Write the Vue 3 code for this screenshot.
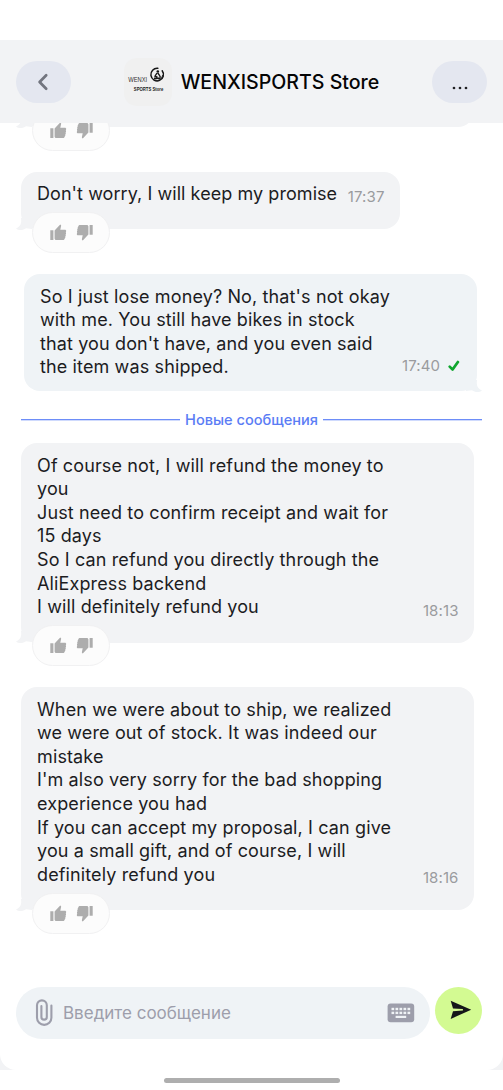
<script setup>
const messages = [
  { id: 'm0', kind: 'in clipped', lines: [], time: '', reactions: true },
  { id: 'm1', kind: 'in short', lines: ["Don't worry, I will keep my promise"], time: '17:37', reactions: true },
  {
    id: 'm2',
    kind: 'out',
    lines: [
      "So I just lose money? No, that's not okay",
      'with me. You still have bikes in stock',
      "that you don't have, and you even said",
      'the item was shipped.',
    ],
    time: '17:40',
    sent: true,
  },
  { id: 'div', divider: 'Новые сообщения' },
  {
    id: 'm3',
    kind: 'in refund',
    lines: [
      'Of course not, I will refund the money to',
      'you',
      'Just need to confirm receipt and wait for',
      '15 days',
      'So I can refund you directly through the',
      'AliExpress backend',
      'I will definitely refund you',
    ],
    time: '18:13',
    reactions: true,
  },
  {
    id: 'm4',
    kind: 'in sorry',
    lines: [
      'When we were about to ship, we realized',
      'we were out of stock. It was indeed our',
      'mistake',
      "I'm also very sorry for the bad shopping",
      'experience you had',
      'If you can accept my proposal, I can give',
      'you a small gift, and of course, I will',
      'definitely refund you',
    ],
    time: '18:16',
    reactions: true,
  },
]
const keys = [0, 1, 2, 3, 4]
</script>

<template>
  <div class="screen">
    <div class="sheet">
      <header class="header">
        <button class="pill-btn back" aria-label="Back">
          <svg width="12" height="18" viewBox="0 0 12 18"><path d="M9.2 2.2 2.6 9l6.6 6.8" fill="none" stroke="#72757f" stroke-width="2.7" stroke-linecap="round" stroke-linejoin="round" /></svg>
        </button>
        <div class="store">
          <svg class="avatar" width="48" height="48" viewBox="0 0 48 48">
            <rect width="48" height="48" rx="13" fill="#f0f0f0" />
            <path d="M38.2 12.8a6.3 6.3 0 1 1-4.4-2.5" fill="none" stroke="#161616" stroke-width="1.5" stroke-linecap="round" />
            <path d="M30.3 21.8q6.7 2.5 8.6-5" fill="none" stroke="#222" stroke-width="1" />
            <circle cx="33.8" cy="13.5" r="1.3" fill="#111" />
            <path d="m33 15-2 3.2 2.5 1M33.8 15l1.5 2 1.2 2.5M30 20.2h6.5" fill="none" stroke="#181818" stroke-width="1.4" />
            <text x="4.2" y="23.6" font-size="7" textLength="19" lengthAdjust="spacingAndGlyphs" class="logo thin">WENXI</text>
            <text x="9.8" y="32.6" font-size="4.8" textLength="29.5" lengthAdjust="spacingAndGlyphs" class="logo">SPORTS Store</text>
          </svg>
          <h1>WENXISPORTS Store</h1>
        </div>
        <button class="pill-btn more" aria-label="More">
          <svg width="16" height="4" viewBox="0 0 16 4" fill="#202124"><circle cx="2" cy="2" r="1.35" /><circle cx="8" cy="2" r="1.35" /><circle cx="14" cy="2" r="1.35" /></svg>
        </button>
      </header>

      <main class="chat">
        <template v-for="m in messages" :key="m.id">
          <div v-if="m.divider" class="divider"><i class="rule"></i><span>{{ m.divider }}</span><i class="rule"></i></div>
          <article v-else class="bubble" :class="m.kind">
            <svg class="tail" width="16" height="13" viewBox="0 0 16 13"><path d="M5 0C5.8 5.5 4.3 8.8 0 10.4c2.6 2.2 7 2.1 10-.2L16 11V0Z" /></svg>
            <div class="text"><div v-for="line in m.lines" :key="line">{{ line }}</div></div>
            <div v-if="m.time" class="meta">
              <time>{{ m.time }}</time>
              <svg v-if="m.sent" width="12" height="12" viewBox="0 0 12 12"><path d="M1.7 6.6 4.6 9.6 9.9 2" fill="none" stroke="#10a62f" stroke-width="2.7" stroke-linecap="round" stroke-linejoin="round" /></svg>
            </div>
            <div v-if="m.reactions" class="reactions">
              <svg width="17" height="17" viewBox="0 0 17 17"><path d="M.3 6.3h3.1V16H.3ZM4.6 6.6 10.2.5l.7.6c.2.2.3.5.2.8l-.8 3.9h4.6c.8 0 1.3.6 1.3 1.3l-.4 1.3.3 1-.5 1.2.2 1.1-.6 1.1.1.9-.7 1c-.2.8-.7 1.3-1.5 1.3H6.2c-.9 0-1.6-.6-1.6-1.5Z" /></svg>
              <svg class="down" width="17" height="17" viewBox="0 0 17 17"><path d="M.3 6.3h3.1V16H.3ZM4.6 6.6 10.2.5l.7.6c.2.2.3.5.2.8l-.8 3.9h4.6c.8 0 1.3.6 1.3 1.3l-.4 1.3.3 1-.5 1.2.2 1.1-.6 1.1.1.9-.7 1c-.2.8-.7 1.3-1.5 1.3H6.2c-.9 0-1.6-.6-1.6-1.5Z" /></svg>
            </div>
          </article>
        </template>
      </main>

      <footer class="composer">
        <div class="field">
          <svg width="18" height="28" viewBox="0 0 18 28"><path d="M16.4 6.5v12.2a7.2 7.2 0 0 1-14.4 0V6.3a4.9 4.9 0 0 1 9.8 0v11.6a2.7 2.7 0 0 1-5.4 0V7" fill="none" stroke="#9d9eab" stroke-width="2.1" stroke-linecap="round" /></svg>
          <span class="placeholder">Введите сообщение</span>
          <svg width="28" height="20" viewBox="0 0 28 20">
            <rect x=".6" y=".6" width="26.6" height="18.6" rx="3" fill="#9d9eab" />
            <g fill="#f0f3f6">
              <template v-for="k in keys" :key="k">
                <rect :x="4.5 + k * 4" y="4.8" width="2.7" height="2.4" />
                <rect :x="4.5 + k * 4" y="8.7" width="2.7" height="2.4" />
              </template>
              <rect x="8.6" y="12.8" width="10.6" height="2.2" />
            </g>
          </svg>
        </div>
        <button class="send" aria-label="Send">
          <svg width="22" height="20" viewBox="0 0 22 20"><path d="M.7.7 21.2 9.8.7 18.9 3 11.2l9.9-.7V9.1L3 8.4Z" fill="#15171a" /></svg>
        </button>
      </footer>
    </div>
    <div class="home"></div>
  </div>
</template>

<style>
body { background: #fff; }
</style>

<style scoped>
.screen {
  width: 503px;
  height: 1090px;
  box-sizing: border-box;
  padding-top: 40px;
  overflow: hidden;
  background: #fff;
  font-family: Inter, "Liberation Sans", sans-serif;
  color: #1c1c1f;
}
.sheet {
  height: 1030px;
  display: flex;
  flex-direction: column;
  background: linear-gradient(#fff 50%, #f2f3f5 50%);
}
.header {
  height: 83px;
  flex: none;
  box-sizing: border-box;
  padding: 0 16px;
  display: flex;
  align-items: center;
  justify-content: space-between;
  background: #f2f3f5;
}
button { border: 0; padding: 0; margin: 0; display: flex; align-items: center; justify-content: center; }
.pill-btn { width: 55px; height: 42px; border-radius: 21px; background: #e4e7f0; }
.back { padding-right: 2px; }
.more { padding-top: 12px; }
.store { display: flex; align-items: center; gap: 9px; }
.logo { font-family: "Liberation Sans", sans-serif; font-weight: 700; fill: #222; }
.thin { font-weight: 400; fill: #333; }
h1 { margin: 0; font-size: 19.6px; line-height: 28px; font-weight: 500; color: #050505; white-space: nowrap; }
.chat {
  flex: 1;
  min-height: 0;
  overflow: hidden;
  display: flex;
  flex-direction: column;
  align-items: flex-start;
  background: #fff;
}
.bubble {
  position: relative;
  flex: none;
  box-sizing: border-box;
  width: 453px;
  margin-left: 21px;
  padding: 10.5px 16px 0;
  border-radius: 16px;
  background: #f2f3f5;
}
.clipped { height: 57px; margin-top: -53px; }
.short { width: 379px; height: 57px; margin-top: 45px; padding-top: 10px; }
.out { height: 117px; margin: 45px 0 0 24px; }
.out, .out .tail { background: #eff3f6; }
.refund { height: 199.5px; }
.sorry { height: 223px; margin-top: 44.5px; }
.text { font-size: 18px; line-height: 23.64px; letter-spacing: 0.125px; white-space: nowrap; }
.short .text { letter-spacing: 0.06px; }
.tail { position: absolute; left: -5px; bottom: -1.5px; fill: #f2f3f5; }
.out .tail { left: auto; right: -5px; transform: scaleX(-1); fill: #eff3f6; background: none; }
.meta {
  position: absolute;
  right: 15.5px;
  bottom: 22px;
  display: flex;
  align-items: center;
  gap: 8px;
  font-size: 15px;
  line-height: 20px;
  letter-spacing: 0.1px;
  color: #9a9b9e;
}
.out .meta { bottom: 15px; right: 17px; }
.reactions {
  position: absolute;
  left: 11px;
  bottom: -23.5px;
  width: 78px;
  height: 41px;
  box-sizing: border-box;
  border: 1px solid #f1f1f2;
  border-radius: 21px;
  background: #fcfcfc;
  display: flex;
  align-items: center;
  justify-content: center;
  gap: 9px;
  fill: #adadad;
}
.down { transform: rotate(180deg); }
.divider {
  flex: none;
  width: 461px;
  height: 52px;
  margin-left: 21px;
  padding-top: 5px;
  box-sizing: border-box;
  display: flex;
  align-items: center;
  gap: 5.5px;
  color: #5b7df5;
  font-size: 14.6px;
  font-weight: 500;
  line-height: 20px;
  white-space: nowrap;
}
.rule { flex: 1; height: 2px; background: linear-gradient(#6d8df8 50%, #cfdafd 50%); }
.composer {
  flex: none;
  height: 97px;
  box-sizing: border-box;
  padding: 14px 21px 0 16px;
  display: flex;
  align-items: flex-start;
  justify-content: space-between;
  background: #fff;
  border-radius: 0 0 16px 16px;
}
.field {
  width: 414px;
  height: 52px;
  box-sizing: border-box;
  border-radius: 26px;
  padding: 0 15px 0 19px;
  display: flex;
  align-items: center;
  background: #eff3f6;
}
.placeholder { flex: 1; margin-left: 10px; font-size: 17px; line-height: 24px; color: #9d9eab; white-space: nowrap; }
.send { width: 47px; height: 47px; border-radius: 50%; background: #d3fa92; padding: 0 0 2px 4px; }
.home { width: 176px; height: 5px; margin: 8px auto 0; border-radius: 3px; background: #aeaeae; }
</style>
